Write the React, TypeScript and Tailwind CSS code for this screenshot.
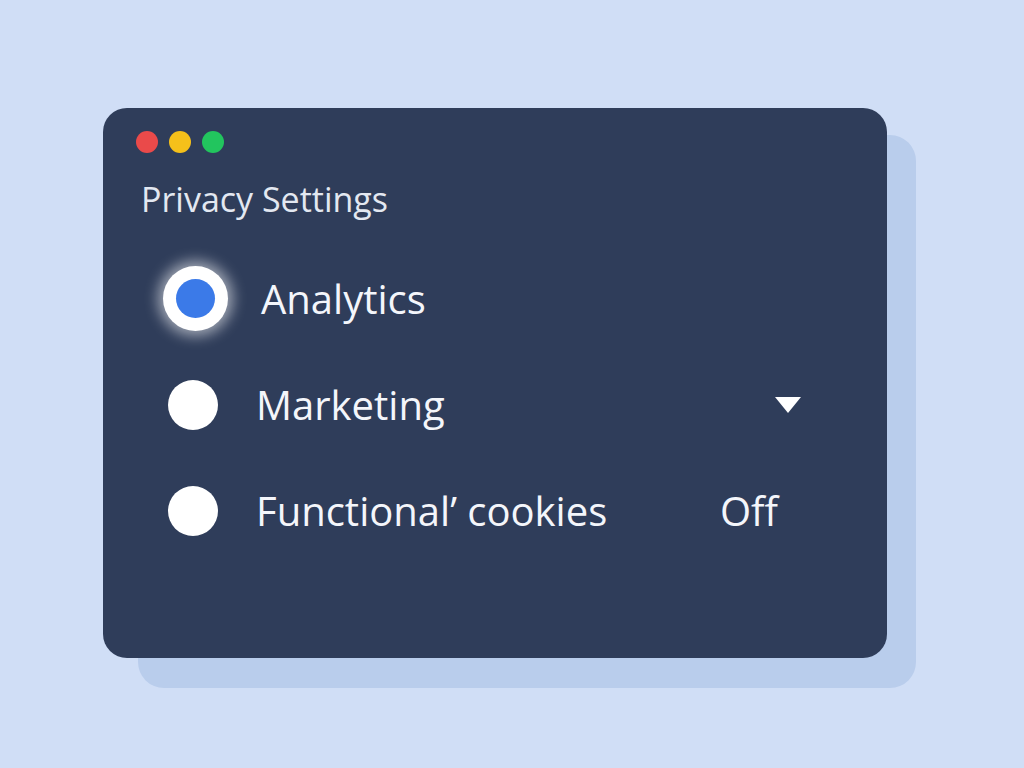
import React from "react";

type Row = {
  label: string;
  selected?: boolean;
  trailing?: "caret" | "off";
};

const ROWS: Row[] = [
  { label: "Analytics", selected: true },
  { label: "Marketing", trailing: "caret" },
  { label: "Functional’ cookies", trailing: "off" },
];

function Radio({ selected }: { selected?: boolean }) {
  if (selected) {
    return (
      <span className="flex h-[65px] w-[65px] items-center justify-center rounded-full bg-white shadow-[0_0_14px_5px_rgba(255,255,255,0.55)]">
        <span className="h-[39px] w-[39px] rounded-full bg-[#3b7ae8]" />
      </span>
    );
  }
  return <span className="ml-[5px] h-[50px] w-[50px] rounded-full bg-white" />;
}

function Caret() {
  return (
    <svg width="26" height="16" viewBox="0 0 26 16" className="block">
      <path d="M0 0 H26 L13 16 Z" fill="#ffffff" />
    </svg>
  );
}

export default function App() {
  return (
    <div
      className="min-h-screen w-full bg-[#d0def6] pl-[103px] pt-[108px]"
      style={{ fontFamily: "'Open Sans', Lato, sans-serif" }}
    >
      <div className="relative h-[550px] w-[784px]">
        {/* back plate */}
        <div className="absolute left-[35px] top-[27px] h-[553px] w-[778px] rounded-[26px] bg-[#b9cdec]" />

        <div className="relative flex h-full w-full flex-col rounded-[24px] bg-[#2f3d5a] pl-[33px] pt-[23px]">
          <div className="flex gap-[11px]">
            <span className="h-[22px] w-[22px] rounded-full bg-[#ea4a4a]" />
            <span className="h-[22px] w-[22px] rounded-full bg-[#f5c01a]" />
            <span className="h-[22px] w-[22px] rounded-full bg-[#22c55e]" />
          </div>

          <h1 className="mt-[26px] pl-[5px] text-[34px] leading-[40px] font-normal text-[#e3e8f1]">
            Privacy Settings
          </h1>

          <div className="mt-[47px] flex flex-col gap-[41px] pl-[27px]">
            {ROWS.map((row) => (
              <div key={row.label} className="flex h-[65px] items-center">
                <Radio selected={row.selected} />
                <span
                  className={`text-[40px] leading-none text-[#f4f6fb] ${row.selected ? "ml-[33px]" : "ml-[38px]"}`}
                >
                  {row.label}
                </span>
                <div className="flex-1" />
                {row.trailing === "caret" && (
                  <div className="mr-[86px]">
                    <Caret />
                  </div>
                )}
                {row.trailing === "off" && (
                  <span className="mr-[109px] text-[40px] leading-none text-[#f4f6fb]">Off</span>
                )}
              </div>
            ))}
          </div>
        </div>
      </div>
    </div>
  );
}
